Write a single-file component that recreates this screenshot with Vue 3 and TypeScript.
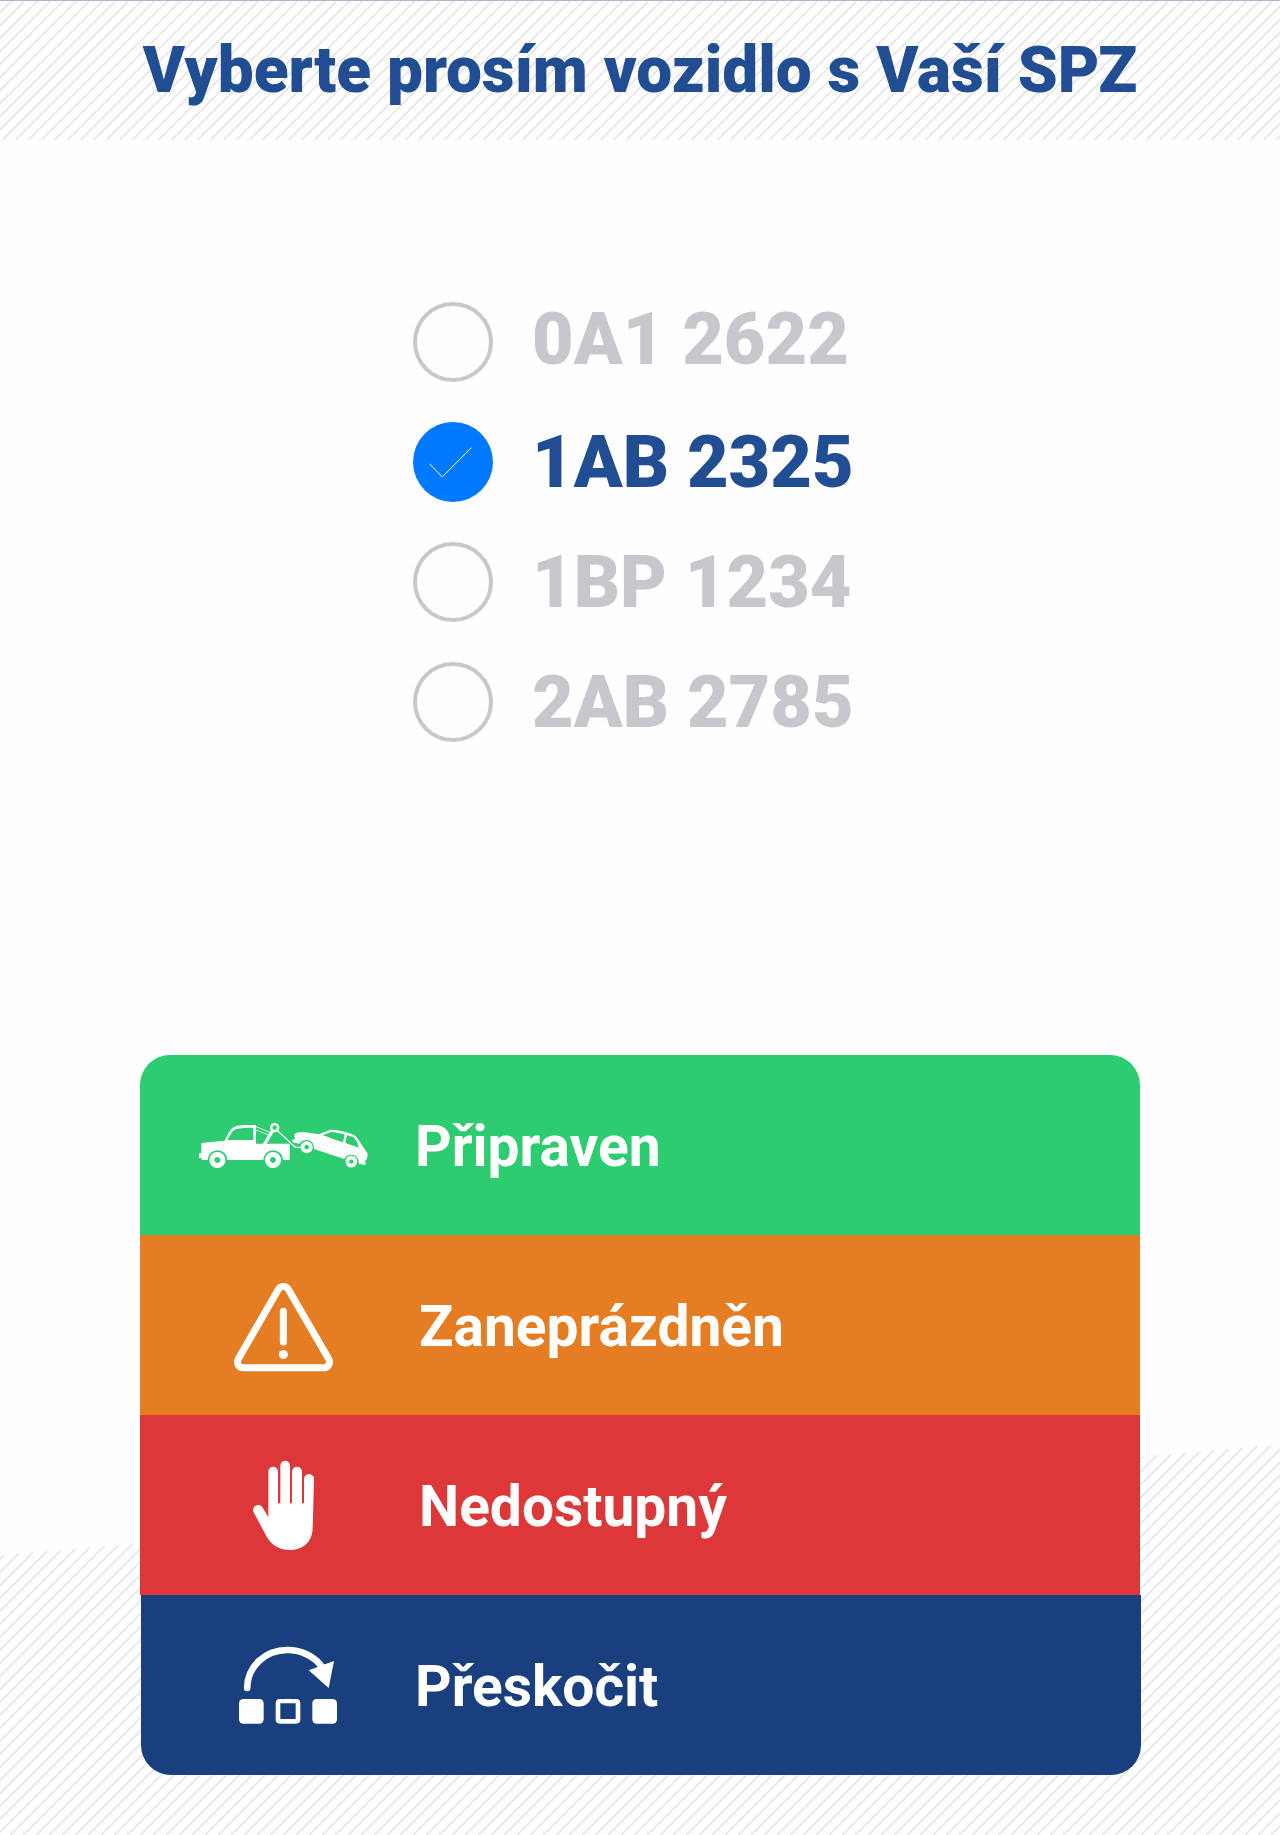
<script setup lang="ts">
import { ref } from 'vue'

interface Plate {
  id: string
  raised?: boolean
}

interface Action {
  key: 'ready' | 'busy' | 'away' | 'skip'
  label: string
}

const plates: Plate[] = [
  { id: '0A1 2622', raised: true },
  { id: '1AB 2325' },
  { id: '1BP 1234' },
  { id: '2AB 2785' },
]

const actions: Action[] = [
  { key: 'ready', label: 'Připraven' },
  { key: 'busy', label: 'Zaneprázdněn' },
  { key: 'away', label: 'Nedostupný' },
  { key: 'skip', label: 'Přeskočit' },
]

const selected = ref('1AB 2325')

/** Diagonal hatching: parallel 45° lines, 13px apart. */
function hatch(width: number, height: number, phase: number): string {
  let d = ''
  for (let x = phase; x < width + height; x += 13) {
    d += `M${x} 0L${x - height} ${height}`
  }
  return d
}

const headerHatch = hatch(1280, 140, 12.5)
const footerHatch = hatch(1280, 395, 2.3)
</script>

<template>
  <main class="page">
    <header class="header">
      <svg class="hatch" width="1280" height="140" viewBox="0 0 1280 140">
        <path :d="headerHatch" stroke="#e0e0e0" stroke-width="1.25" />
      </svg>
      <h1 class="title">Vyberte prosím vozidlo s Vaší SPZ</h1>
    </header>

    <section class="plates">
      <button
        v-for="plate in plates"
        :key="plate.id"
        type="button"
        class="plate"
        :class="{ active: plate.id === selected, raised: plate.raised }"
        @click="selected = plate.id"
      >
        <span class="radio">
          <svg v-if="plate.id === selected" width="80" height="80" viewBox="0 0 80 80">
            <path d="M16.400 41.700L29.300 54.900L58.500 25.500" fill="none" stroke="#fff" stroke-width="1" />
          </svg>
        </span>
        <span class="plate-id">{{ plate.id }}</span>
      </button>
    </section>

    <section class="actions">
      <button
        v-for="action in actions"
        :key="action.key"
        type="button"
        class="action"
        :class="action.key"
      >
        <span class="icon">
          <svg v-if="action.key === 'ready'" width="190" height="70" viewBox="0 0 570 210" fill="#fff">
            <path
              fill-rule="evenodd"
              d="M34 99L104 92C112 76 119 58 132 51C142 45 165 45 198 45V101H299V150H279A29.500 29.500 0 0 0 220 150H112A29.500 29.500 0 0 0 53 150H35V144H27V130H34ZM112 90H190V53C170 53 150 54 139 57C127 61 120 76 112 90Z"
            />
            <path fill-rule="evenodd" d="M82 126a24 24 0 1 0 .1 0ZM82 141a9 9 0 1 1 -.1 0Z" />
            <path fill-rule="evenodd" d="M249 126a24 24 0 1 0 .1 0ZM249 141a9 9 0 1 1 -.1 0Z" />
            <g fill="none" stroke="#fff">
              <path d="M223 103L248 62" stroke-width="10" />
              <circle cx="254" cy="53" r="10.500" stroke-width="7" />
              <path d="M198 50L242 68M198 60L238 76" stroke-width="2.500" />
              <path d="M261 61L316 112H336" stroke-width="4" />
              <path d="M256 54l4 5" stroke-width="2" />
            </g>
            <path
              fill-rule="evenodd"
              d="M313 74C318 66 328 66 345 67L386 73L422 59C440 59 452 62 465 66C480 70 491 73 499 81C506 88 509 95 513 101L532 130C535 140 530 149 525 154L528 160L524 165L507 161C506 141 495 134 484 134C472 134 466 140 463 147L372 117C372 98 363 90 350 90C340 90 333 94 329 101L311 98L305 90L316 88Q313 82 313 74ZM398 76L425 65L464 73L459 97C435 91 418 81 398 76ZM471 75L491 82Q501 93 507 113L466 99Z"
            />
            <path fill-rule="evenodd" d="M350 93.500a18 18 0 1 0 .1 0ZM350 104.500a7 7 0 1 1 -.1 0Z" />
            <path fill-rule="evenodd" d="M484 137.500a17.500 17.500 0 1 0 .1 0ZM484 148.500a6.500 6.500 0 1 1 -.1 0Z" />
          </svg>

          <svg v-else-if="action.key === 'busy'" width="130" height="110" viewBox="0 0 390 330">
            <path
              d="M54.800 267.300L174.800 58.300A17.500 17.500 0 0 1 205.200 58.300L326.200 267.300A17.500 17.500 0 0 1 311 293.500H70A17.500 17.500 0 0 1 54.800 267.300Z"
              fill="none"
              stroke="#fff"
              stroke-width="21"
            />
            <path d="M190 124V216" stroke="#fff" stroke-width="21" stroke-linecap="round" />
            <circle cx="190" cy="253.500" r="13.500" fill="#fff" />
          </svg>

          <svg v-else-if="action.key === 'away'" width="90" height="110" viewBox="0 0 270 330">
            <path
              fill="#fff"
              d="M85 202V65a14.500 14.500 0 0 1 29 0V160H121V47a14.500 14.500 0 0 1 29 0V160H156V65a15 15 0 0 1 30 0V160H192V87a15 15 0 0 1 30 0L218 236C216 278 186 300 148 300C116 300 93 282 80 260L41 187C33 170 55 156 67 171Z"
            />
          </svg>

          <svg v-else width="130" height="110" viewBox="0 0 390 330">
            <path
              d="M66.500 174C67 110 120 60 187 60C231 60 270 80 292 112"
              fill="none"
              stroke="#fff"
              stroke-width="20"
              stroke-linecap="round"
            />
            <path d="M251 121L327 93L311 174Z" fill="#fff" />
            <rect x="42" y="207" width="74" height="74" rx="13" fill="#fff" />
            <path
              fill="#fff"
              fill-rule="evenodd"
              d="M165 207H213Q226 207 226 220V268Q226 281 213 281H165Q152 281 152 268V220Q152 207 165 207ZM166 220V267H212V220Z"
            />
            <rect x="262" y="207" width="74" height="74" rx="13" fill="#fff" />
          </svg>
        </span>
        <span class="label">{{ action.label }}</span>
      </button>
    </section>

    <svg class="hatch footer-hatch" width="1280" height="395" viewBox="0 0 1280 395">
      <clipPath id="slope">
        <polygon points="0,115.500 1280,4.500 1280,395 0,395" />
      </clipPath>
      <path :d="footerHatch" clip-path="url(#slope)" stroke="#e2e2e2" stroke-width="1.4" />
    </svg>
  </main>
</template>

<style>
body {
  margin: 0;
  background: #fff;
}
</style>

<style scoped>
.page {
  position: relative;
  box-sizing: border-box;
  width: 1280px;
  height: 1835px;
  overflow: hidden;
  background: #fefefe;
  font-family: Roboto, "Liberation Sans", sans-serif;
}

.header {
  position: relative;
  box-sizing: border-box;
  height: 140px;
  border-top: 1px solid #a8b8d5;
}

.hatch {
  position: absolute;
  left: 0;
  top: -1px;
  z-index: 0;
}

.header .hatch {
  clip-path: inset(1px 0 0 0);
}

.footer-hatch {
  top: auto;
  bottom: 0;
}

.title {
  position: relative;
  margin: 0;
  padding-top: 32px;
  text-align: center;
  font-size: 63.9px;
  line-height: 75px;
  font-weight: 900;
  color: #214d92;
  white-space: nowrap;
}

.plates {
  display: flex;
  flex-direction: column;
  gap: 40px;
  margin: 162px 0 0 413px;
}

button {
  padding: 0;
  border: 0;
  background: none;
  font: inherit;
  text-align: left;
  cursor: pointer;
}

.plate {
  display: flex;
  align-items: center;
  gap: 39px;
  height: 80px;
  color: #c8c7cd;
}

.plate.active {
  color: #214d92;
}

.radio {
  box-sizing: border-box;
  width: 80px;
  height: 80px;
  border: 4px solid #c8c7cd;
  border-radius: 50%;
}

.active .radio {
  border: 0;
  background: #0079ff;
}

.radio svg,
.icon svg {
  display: block;
}

.plate-id {
  padding-top: 2px;
  font-size: 71.9px;
  line-height: 80px;
  font-weight: 900;
  white-space: nowrap;
}

.raised .plate-id {
  margin-bottom: 6px;
}

.actions {
  position: relative;
  z-index: 1;
  width: 1000px;
  margin: 313px 0 0 140px;
}

.action {
  display: flex;
  align-items: center;
  width: 100%;
  height: 180px;
  color: #fff;
}

.icon {
  display: flex;
  justify-content: center;
  width: 200px;
  margin-left: 45px;
}

.label {
  margin-left: 34px;
  padding-top: 4px;
  font-size: 56.9px;
  line-height: 68px;
  font-weight: 700;
  white-space: nowrap;
}

.ready {
  border-radius: 30px 30px 0 0;
  background: #2ecc71;
}

.ready .label,
.skip .label {
  margin-left: 30px;
}

.busy {
  background: #e57e22;
}

.away {
  background: #dc3839;
}

.skip {
  margin-left: 1px;
  border-radius: 0 0 30px 30px;
  background: #193f7f;
}

.skip .icon {
  margin-left: 49px;
}

.skip .label {
  margin-left: 25px;
}
</style>
